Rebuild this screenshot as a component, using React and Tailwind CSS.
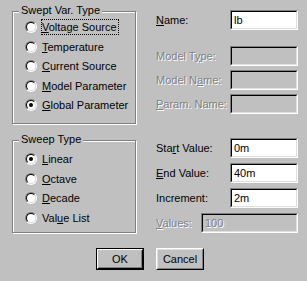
const font = { fontFamily: '"Liberation Sans", Arial, sans-serif' };

const U = ({ children }) => <span className="underline underline-offset-[1px]">{children}</span>;

const Radio = ({ checked, focused, children }) => (
  <div className="flex items-center h-[16px]">
    <div className="w-[12px] h-[12px] rounded-full border border-t-[#808080] border-l-[#808080] border-r-white border-b-white flex">
      <div className="flex-1 rounded-full border border-t-black border-l-black border-r-[#dfdfdf] border-b-[#dfdfdf] bg-white flex items-center justify-center">
        {checked && <div className="w-[4px] h-[4px] rounded-full bg-black"></div>}
      </div>
    </div>
    <span
      className={`ml-[4px] border border-dotted leading-[14px] pr-[1px] ${
        focused ? "border-black" : "border-transparent"
      }`}
    >
      {children}
    </span>
  </div>
);

const GroupBox = ({ title, className, children }) => (
  <div
    className={`relative border border-[#808080] shadow-[inset_1px_1px_0_#fff,1px_1px_0_#fff] w-[124px] ${className}`}
  >
    <span className="absolute -top-[8px] left-[6px] px-[2px] bg-[#c0c0c0] leading-[13px]">
      {title}
    </span>
    {children}
  </div>
);

const Field = ({ label, value, disabled, wide }) => (
  <div className="flex items-center justify-between h-[20px]">
    <span
      className={
        disabled ? "text-[#808080] [text-shadow:1px_1px_0_#fff]" : "text-black"
      }
    >
      {label}
    </span>
    <div
      className={`h-[20px] border border-t-[#808080] border-l-[#808080] border-r-white border-b-white flex ${
        wide ? "w-[97px]" : "w-[68px]"
      }`}
    >
      <div
        className={`flex-1 border border-t-black border-l-black border-r-[#dfdfdf] border-b-[#dfdfdf] flex items-center pl-[2px] ${
          disabled ? "bg-[#c0c0c0] text-[#808080] [text-shadow:1px_1px_0_#fff]" : "bg-white"
        }`}
      >
        {value}
      </div>
    </div>
  </div>
);

export default function App() {
  return (
    <div
      className="w-[307px] h-[281px] bg-[#c0c0c0] text-[11px] text-black flex flex-col overflow-hidden"
      style={font}
    >
      <div className="flex">
        <div className="ml-[12px] mt-[11px] flex flex-col">
          <GroupBox title="Swept Var. Type" className="h-[113px] pt-[7px] pl-[12px]">
            <div className="flex flex-col gap-[3.6px]">
              <Radio focused>
                <U>V</U>oltage Source
              </Radio>
              <Radio>
                <U>T</U>emperature
              </Radio>
              <Radio>
                <U>C</U>urrent Source
              </Radio>
              <Radio>
                <U>M</U>odel Parameter
              </Radio>
              <Radio checked>
                <U>G</U>lobal Parameter
              </Radio>
            </div>
          </GroupBox>
          <GroupBox title="Sweep Type" className="mt-[16px] h-[93px] pt-[10px] pl-[12px]">
            <div className="flex flex-col gap-[3.7px]">
              <Radio checked>
                <U>L</U>inear
              </Radio>
              <Radio>
                <U>O</U>ctave
              </Radio>
              <Radio>
                <U>D</U>ecade
              </Radio>
              <Radio>
                Val<U>u</U>e List
              </Radio>
            </div>
          </GroupBox>
        </div>

        <div className="ml-[20px] mt-[10px] w-[142px] flex flex-col">
          <Field
            label={
              <>
                <U>N</U>ame:
              </>
            }
            value="lb"
          />
          <div className="mt-[16px] flex flex-col gap-[4px]">
            <Field
              disabled
              label={
                <>
                  Model T<U>y</U>pe:
                </>
              }
            />
            <Field
              disabled
              label={
                <>
                  Model N<U>a</U>me:
                </>
              }
            />
            <Field
              disabled
              label={
                <>
                  <U>P</U>aram. Name:
                </>
              }
            />
          </div>
          <div className="mt-[24px] flex flex-col gap-[5px]">
            <Field
              label={
                <>
                  Sta<U>r</U>t Value:
                </>
              }
              value="0m"
            />
            <Field
              label={
                <>
                  <U>E</U>nd Value:
                </>
              }
              value="40m"
            />
            <Field label="Increment:" value="2m" />
            <Field
              disabled
              wide
              label={
                <>
                  <U>V</U>alues:
                </>
              }
              value="100"
            />
          </div>
        </div>
      </div>

      <div className="flex ml-[96px] mt-[15px] gap-[12px]">
        <div className="w-[48px] h-[22px] border border-black flex">
          <div className="flex-1 border border-t-white border-l-white border-r-black border-b-black flex">
            <div className="flex-1 border border-t-[#c0c0c0] border-l-[#c0c0c0] border-r-[#808080] border-b-[#808080] flex items-center justify-center">
              OK
            </div>
          </div>
        </div>
        <div className="w-[48px] h-[22px] border border-t-white border-l-white border-r-black border-b-black flex">
          <div className="flex-1 border border-t-[#dfdfdf] border-l-[#dfdfdf] border-r-[#808080] border-b-[#808080] flex items-center justify-center">
            Cancel
          </div>
        </div>
      </div>
    </div>
  );
}
